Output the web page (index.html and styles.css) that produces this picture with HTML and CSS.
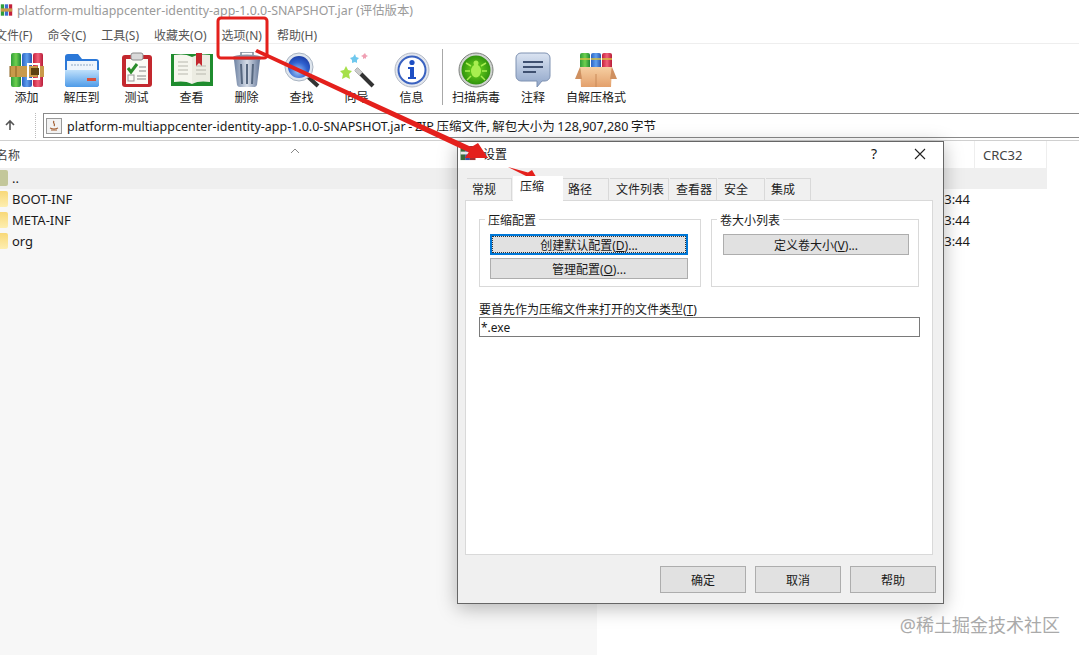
FILE: index.html
```html
<!DOCTYPE html>
<html lang="zh-CN">
<head>
    <meta charset="UTF-8">
    <title>platform-multiappcenter-identity-app-1.0.0-SNAPSHOT.jar</title>
    <link rel="stylesheet" href="styles.css">
</head>
<body>
    <svg class="defs" width="0" height="0">
        <defs>
            <linearGradient id="gGreen" x1="0" x2="1" y1="0" y2="0"><stop offset="0" stop-color="#2f9e3a"/><stop offset=".5" stop-color="#6fd04f"/><stop offset="1" stop-color="#1d8a34"/></linearGradient>
            <linearGradient id="gBlue" x1="0" x2="1" y1="0" y2="0"><stop offset="0" stop-color="#2b62c4"/><stop offset=".5" stop-color="#5fa0ee"/><stop offset="1" stop-color="#2a55b0"/></linearGradient>
            <linearGradient id="gRed" x1="0" x2="1" y1="0" y2="0"><stop offset="0" stop-color="#c4203a"/><stop offset=".5" stop-color="#f0607a"/><stop offset="1" stop-color="#b81c38"/></linearGradient>
            <linearGradient id="gFolder" x1="0" x2="0" y1="0" y2="1"><stop offset="0" stop-color="#bfe0fb"/><stop offset="1" stop-color="#4e9be8"/></linearGradient>
            <linearGradient id="gCan" x1="0" x2="1" y1="0" y2="0"><stop offset="0" stop-color="#6f83a3"/><stop offset=".5" stop-color="#d6dde8"/><stop offset="1" stop-color="#66799a"/></linearGradient>
            <radialGradient id="gLens" cx=".45" cy=".7" r=".7"><stop offset="0" stop-color="#9cc4f5"/><stop offset=".6" stop-color="#2f62d0"/><stop offset="1" stop-color="#1d3fa8"/></radialGradient>
            <radialGradient id="gVirus" cx=".5" cy=".5" r=".55"><stop offset="0" stop-color="#74dc20"/><stop offset="1" stop-color="#2a8c0c"/></radialGradient>
            <linearGradient id="gNote" x1="0" x2="0" y1="0" y2="1"><stop offset="0" stop-color="#dbe4f2"/><stop offset="1" stop-color="#8ea4c8"/></linearGradient>
            <linearGradient id="gBox" x1="0" x2="0" y1="0" y2="1"><stop offset="0" stop-color="#f6cfa2"/><stop offset="1" stop-color="#e3a06c"/></linearGradient>
        </defs>
    </svg>

    <div class="titlebar">
        <svg class="app-icon" viewBox="0 0 16 16"><rect x="1" y="1" width="4" height="14" fill="#2f9e3a"/><rect x="6" y="1" width="4" height="14" fill="#3a6fd0"/><rect x="11" y="1" width="4" height="14" fill="#c4203a"/><rect x="1" y="6" width="14" height="4" fill="#c99a4a"/></svg>
        <span class="title-text">platform-multiappcenter-identity-app-1.0.0-SNAPSHOT.jar (评估版本)</span>
    </div>

    <div class="menubar">
        <span class="menu-item menu-first">文件(F)</span>
        <span class="menu-item">命令(C)</span>
        <span class="menu-item">工具(S)</span>
        <span class="menu-item">收藏夹(O)</span>
        <span class="menu-item">选项(N)</span>
        <span class="menu-item">帮助(H)</span>
    </div>

    <div class="toolbar">
        <div class="tool tool-first">
            <svg class="tool-icon" viewBox="0 0 36 36">
                <rect x="2" y="1" width="10" height="34" rx="2" fill="url(#gGreen)"/>
                <rect x="13" y="1" width="10" height="34" rx="2" fill="url(#gBlue)"/>
                <rect x="24" y="1" width="10" height="34" rx="2" fill="url(#gRed)"/>
                <rect x="1" y="14" width="34" height="11" fill="#c99a4a"/>
                <path d="M1 14v11M7 14v11M29 14v11" stroke="#8a6220" stroke-width="1"/>
                <rect x="19" y="12" width="11" height="15" fill="none" stroke="#fff" stroke-width="2"/>
                <rect x="22" y="16" width="8" height="7" fill="#5c4212"/>
            </svg>
            <span class="tool-label">添加</span>
        </div>
        <div class="tool">
            <svg class="tool-icon wide" viewBox="0 0 36 36">
                <path d="M1 5a3 3 0 0 1 3-3h10l4 5h14a3 3 0 0 1 3 3v22a3 3 0 0 1-3 3H4a3 3 0 0 1-3-3z" fill="#2b78d8"/>
                <rect x="3" y="9" width="30" height="14" fill="#eef5fc"/>
                <path d="M7 13h22" stroke="#8fa8c4" stroke-width="1" stroke-dasharray="2 1"/>
                <path d="M1 18h34v14a3 3 0 0 1-3 3H4a3 3 0 0 1-3-3z" fill="url(#gFolder)"/>
                <rect x="23" y="26" width="9" height="3" fill="#d8503c"/>
            </svg>
            <span class="tool-label">解压到</span>
        </div>
        <div class="tool">
            <svg class="tool-icon" viewBox="0 0 36 36">
                <rect x="3" y="3" width="30" height="32" rx="3" fill="#c3282e"/>
                <rect x="7" y="7" width="22" height="25" fill="#fbfbf6"/>
                <rect x="12" y="1" width="12" height="7" rx="2" fill="#d9d9d9" stroke="#8c8c8c"/>
                <path d="M9 16l3 4 6-8" fill="none" stroke="#2a8c2a" stroke-width="3"/>
                <rect x="9" y="23" width="6" height="6" fill="none" stroke="#999"/>
                <path d="M20 15h7M20 19h7M18 24h9M18 27h9" stroke="#888" stroke-width="1.2"/>
            </svg>
            <span class="tool-label">测试</span>
        </div>
        <div class="tool">
            <svg class="tool-icon wide" viewBox="0 0 42 36">
                <path d="M0 2h42v32H0z" fill="#1f8c2e"/>
                <path d="M3 3c6-1 13-1 18 2v27c-5-3-12-3-18-2z" fill="#f6f6ee"/>
                <path d="M39 3c-6-1-13-1-18 2v27c5-3 12-3 18-2z" fill="#ecece2"/>
                <path d="M7 10h10M7 14h10M7 18h10M7 22h10M25 14h10M25 18h10M25 22h10" stroke="#b8b8ae" stroke-width="1.2"/>
                <path d="M25 1h6v13l-3-3-3 3z" fill="#c3282e"/>
            </svg>
            <span class="tool-label">查看</span>
        </div>
        <div class="tool">
            <svg class="tool-icon" viewBox="0 0 36 36">
                <rect x="12" y="0" width="12" height="4" fill="none" stroke="#7f8a99" stroke-width="1.5"/>
                <ellipse cx="18" cy="6" rx="15" ry="3.5" fill="#8b96a8"/>
                <path d="M5 8h26l-3 25a3 3 0 0 1-3 2H11a3 3 0 0 1-3-2z" fill="url(#gCan)"/>
                <path d="M12 12l1 20M18 12v20M24 12l-1 20" stroke="#56677f" stroke-width="2"/>
            </svg>
            <span class="tool-label">删除</span>
        </div>
        <div class="tool">
            <svg class="tool-icon" viewBox="0 0 36 36">
                <path d="M22 23l12 11" stroke="#333" stroke-width="4"/>
                <circle cx="15" cy="15" r="14" fill="#dfe6ee" stroke="#a9b4c2"/>
                <circle cx="15" cy="15" r="11" fill="url(#gLens)"/>
            </svg>
            <span class="tool-label">查找</span>
        </div>
        <div class="tool">
            <svg class="tool-icon" viewBox="0 0 36 36">
                <path d="M17 17l17 17" stroke="#333" stroke-width="4"/>
                <path d="M17 17l5 5" stroke="#ccc" stroke-width="4"/>
                <path d="M7 14l2 4 4 1-3 3 1 5-4-2-4 2 1-5-3-3 4-1z" fill="#a6e04a"/>
                <path d="M16 2l1 3 3 1-2 2v3l-2-1-3 1v-3l-2-2 3-1z" fill="#6fc8ee"/>
                <path d="M26 1l1 2 2 1-2 1v2l-1-1-2 1v-2l-2-1 2-1z" fill="#f0a0b4"/>
            </svg>
            <span class="tool-label">向导</span>
        </div>
        <div class="tool">
            <svg class="tool-icon" viewBox="0 0 36 36">
                <circle cx="18" cy="18" r="17" fill="#e2e6ee" stroke="#b4bac6"/>
                <circle cx="18" cy="18" r="13.5" fill="#fff" stroke="#3a62c0" stroke-width="2"/>
                <circle cx="18" cy="10.5" r="2.6" fill="#1e4fc4"/>
                <path d="M14 15h6v10h2v2h-8v-2h2v-8h-2z" fill="#1e4fc4"/>
            </svg>
            <span class="tool-label">信息</span>
        </div>
        <div class="tool-sep"></div>
        <div class="tool tool-scan">
            <svg class="tool-icon" viewBox="0 0 36 36">
                <circle cx="18" cy="18" r="17" fill="#d0d4d0" stroke="#7c807c"/>
                <circle cx="18" cy="18" r="14.5" fill="url(#gVirus)"/>
                <ellipse cx="18" cy="19" rx="5" ry="6.5" fill="#a8ee50"/>
                <circle cx="18" cy="11" r="2.5" fill="#a8ee50"/>
                <path d="M13 14l-5-3M23 14l5-3M12 19H7M24 19h5M13 24l-4 4M23 24l4 4" stroke="#a8ee50" stroke-width="1.5"/>
            </svg>
            <span class="tool-label">扫描病毒</span>
        </div>
        <div class="tool tool-note">
            <svg class="tool-icon" viewBox="0 0 36 36">
                <path d="M6 1h24a5 5 0 0 1 5 5v18a5 5 0 0 1-5 5h-3l-5 6v-6H6a5 5 0 0 1-5-5V6a5 5 0 0 1 5-5z" fill="url(#gNote)" stroke="#7f92b2"/>
                <path d="M8 10h20M8 15h20M8 20h13" stroke="#3f5070" stroke-width="1.8"/>
            </svg>
            <span class="tool-label">注释</span>
        </div>
        <div class="tool tool-sfx">
            <svg class="tool-icon wide" viewBox="0 0 42 36">
                <rect x="5" y="1" width="10" height="20" rx="2" fill="url(#gGreen)"/>
                <rect x="16" y="1" width="10" height="20" rx="2" fill="url(#gBlue)"/>
                <rect x="27" y="1" width="10" height="20" rx="2" fill="url(#gRed)"/>
                <path d="M5 7h10M16 7h10M27 7h10" stroke="#d8c040" stroke-width="1.5"/>
                <path d="M5 15h32l-1 20H6z" fill="url(#gBox)"/>
                <path d="M5 15L0 27h7zM37 15l5 12h-7z" fill="#cf9060"/>
                <path d="M21 22v13" stroke="#c98a58"/>
            </svg>
            <span class="tool-label">自解压格式</span>
        </div>
    </div>

    <div class="addressbar">
        <svg class="up-arrow" viewBox="0 0 12 12"><path d="M6 11V2M2 6l4-4 4 4" fill="none" stroke="#555" stroke-width="1.6"/></svg>
        <div class="grip"></div>
        <div class="address-box">
            <svg class="jar-icon" viewBox="0 0 16 16"><rect x=".5" y=".5" width="15" height="15" fill="#f2f2f2" stroke="#999"/><path d="M5 12h6M4 10c2 1 6 1 8 0M8 3c-2 2 2 3 0 5" fill="none" stroke="#a05a2c" stroke-width="1.2"/></svg>
            <span>platform-multiappcenter-identity-app-1.0.0-SNAPSHOT.jar - ZIP 压缩文件, 解包大小为 128,907,280 字节</span>
        </div>
    </div>

    <div class="filelist">
        <div class="list-head">
            <div class="head-name">名称<svg class="sort-caret" viewBox="0 0 10 6"><path d="M1 5l4-4 4 4" fill="none" stroke="#888"/></svg></div>
            <div class="head-crc">CRC32</div>
        </div>
        <div class="list-body">
            <div class="row row-up"><div class="row-name"><span class="folder folder-up"></span>..</div></div>
            <div class="row"><div class="row-name"><span class="folder"></span>BOOT-INF</div><div class="row-time">13:44</div></div>
            <div class="row"><div class="row-name"><span class="folder"></span>META-INF</div><div class="row-time">13:44</div></div>
            <div class="row"><div class="row-name"><span class="folder"></span>org</div><div class="row-time">13:44</div></div>
        </div>
    </div>

    <div class="dialog">
        <div class="dialog-title">
            <svg class="dialog-icon" viewBox="0 0 16 16"><rect x="0" y="0" width="5" height="15" fill="#3a6a3a"/><rect x="5" y="0" width="5" height="15" fill="#3a50a0"/><rect x="10" y="0" width="6" height="15" fill="#a03030"/><rect x="0" y="6" width="16" height="3" fill="#e8e8e8"/></svg>
            <span class="dialog-name">设置</span>
            <span class="dialog-help">?</span>
            <svg class="dialog-close" viewBox="0 0 12 12"><path d="M1 1l10 10M11 1L1 11" stroke="#222" stroke-width="1.1"/></svg>
        </div>
        <div class="dialog-body">
            <div class="tabs">
                <div class="tab tab-w46">常规</div>
                <div class="tab tab-active">压缩</div>
                <div class="tab tab-w46">路径</div>
                <div class="tab tab-w60">文件列表</div>
                <div class="tab tab-w48">查看器</div>
                <div class="tab tab-w48">安全</div>
                <div class="tab tab-w46">集成</div>
            </div>
            <div class="panel">
                <div class="groups">
                    <fieldset class="group group-left">
                        <legend>压缩配置</legend>
                        <button class="btn btn-focus">创建默认配置(<u>D</u>)...</button>
                        <button class="btn">管理配置(<u>O</u>)...</button>
                    </fieldset>
                    <fieldset class="group group-right">
                        <legend>卷大小列表</legend>
                        <button class="btn">定义卷大小(<u>V</u>)...</button>
                    </fieldset>
                </div>
                <label class="type-label" for="types">要首先作为压缩文件来打开的文件类型(<u>T</u>)</label>
                <input class="type-input" id="types" type="text" value="*.exe">
            </div>
            <div class="dialog-foot">
                <button class="foot-btn">确定</button>
                <button class="foot-btn">取消</button>
                <button class="foot-btn">帮助</button>
            </div>
        </div>
    </div>

    <!-- red marks drawn over the screenshot -->
    <svg class="marks" viewBox="0 0 1079 655">
        <rect x="218" y="18" width="49" height="40" rx="3" fill="none" stroke="#e4201c" stroke-width="3"/>
        <path d="M257 49L471.3 146.9 478 143 488 158 465 158 468.7 152.3 255 52z" fill="#e4201c"/>
        <path d="M508 167L528 172.5 532 170 538 180 525 178 526 176z" fill="#e4201c"/>
    </svg>

    <div class="watermark">@稀土掘金技术社区</div>
</body>
</html>
```

FILE: styles.css
```css
html, body {
    margin: 0;
    height: 655px;
    overflow: hidden;
    background: #fff;
    color: #1a1a1a;
    font-family: "Noto Sans", "Noto Sans CJK SC", sans-serif;
    font-size: 12px;
}
.defs {
    position: absolute;
}
.titlebar {
    height: 20px;
    display: flex;
    align-items: center;
    gap: 4px;
    color: #9a9a9a;
    font-size: 12.4px;
}
.app-icon {
    width: 13px;
    height: 16px;
    flex: none;
}
.menubar {
    height: 24px;
    box-sizing: border-box;
    padding-top: 6px;
    display: flex;
    align-items: center;
    border-bottom: 1px solid #eee;
    color: #555;
}
.menu-item {
    margin-right: 15px;
}
.menu-first {
    margin-left: -5px;
}
.toolbar {
    height: 64px;
    display: flex;
}
.tool {
    width: 55px;
    flex: none;
    display: flex;
    flex-direction: column;
    align-items: center;
    padding-top: 8px;
}
.tool-first {
    width: 53px;
    margin-right: 1px;
}
.tool-icon {
    width: 36px;
    height: 36px;
    margin-bottom: 2px;
}
.tool-icon.wide {
    width: 42px;
}
.tool-label {
    line-height: 16px;
}
.tool-sep {
    width: 1px;
    height: 56px;
    margin: 5px 5px 0 3px;
    background: #a8a8a8;
    flex: none;
}
.tool-scan {
    width: 56px;
}
.tool-note {
    width: 58px;
}
.tool-sfx {
    width: 68px;
}
.addressbar {
    height: 32px;
    display: flex;
    align-items: flex-start;
}
.up-arrow {
    width: 12px;
    height: 12px;
    flex: none;
    margin: 11px 0 0 4px;
}
.grip {
    width: 2px;
    height: 25px;
    flex: none;
    margin: 5px 6px 0 19px;
    border-left: 1px dotted #bbb;
    box-sizing: border-box;
}
.address-box {
    height: 25px;
    flex: 1;
    min-width: 0;
    margin-top: 5px;
    box-sizing: border-box;
    border: 1px solid #8a8a8a;
    border-right: none;
    display: flex;
    align-items: center;
    gap: 5px;
    padding-left: 2px;
    font-size: 12.5px;
    word-spacing: -0.7px;
    white-space: nowrap;
}
.jar-icon {
    width: 16px;
    height: 16px;
}
.filelist {
    border-top: 1px solid #d0d0d0;
}
.list-head {
    height: 27px;
    width: 1047px;
    display: flex;
    align-items: center;
    color: #444;
}
.head-name {
    width: 978px;
    margin-left: -4px;
    flex: none;
    position: relative;
}
.sort-caret {
    position: absolute;
    left: 294px;
    top: 2px;
    width: 10px;
    height: 6px;
}
.head-crc {
    flex: 1;
    align-self: stretch;
    display: flex;
    align-items: center;
    padding-left: 8px;
    font-size: 13px;
    border-left: 1px solid #eee;
    border-right: 1px solid #eee;
}
.list-body {
    height: 487px;
    font-size: 13px;
    background: linear-gradient(to right, #f7f7f7 597px, #fff 597px);
}
.row {
    height: 21px;
    box-sizing: border-box;
    padding-bottom: 2px;
    width: 1047px;
    display: flex;
    align-items: center;
}
.row-up {
    background: #efefef;
}
.row-name {
    flex: 1;
    display: flex;
    align-items: center;
    gap: 4px;
}
.row-time {
    width: 77px;
    margin-right: 77px;
    text-align: right;
    flex: none;
}
.folder {
    width: 8px;
    height: 16px;
    flex: none;
    background: linear-gradient(#f8d878, #fdeeb0);
    border-radius: 0 2px 2px 0;
}
.folder-up {
    background: #c3c79a;
}
.dialog {
    position: absolute;
    left: 457px;
    top: 141px;
    width: 487px;
    height: 463px;
    box-sizing: border-box;
    border: 1px solid #666;
    background: #f0f0f0;
    display: flex;
    flex-direction: column;
    box-shadow: 0 4px 18px rgba(0, 0, 0, 0.28);
}
.dialog-title {
    height: 26px;
    box-sizing: border-box;
    padding: 0 0 3px 2px;
    flex: none;
    background: #fff;
    display: flex;
    align-items: center;
}
.dialog-icon {
    width: 16px;
    height: 15px;
}
.dialog-name {
    margin-left: 7px;
    flex: 1;
}
.dialog-help {
    margin-right: 37px;
    font-size: 14px;
}
.dialog-close {
    width: 12px;
    height: 12px;
    margin-right: 17px;
}
.dialog-body {
    flex: 1;
    display: flex;
    flex-direction: column;
}
.tabs {
    height: 32px;
    flex: none;
    display: flex;
    align-items: flex-end;
    padding-left: 9px;
    position: relative;
    z-index: 1;
}
.tab {
    height: 22px;
    box-sizing: border-box;
    margin-right: 1px;
    padding-left: 5px;
    line-height: 22px;
    background: #f0f0f0;
    border: 1px solid #d9d9d9;
    border-bottom: none;
    border-left: none;
    color: #222;
}
.tab-w46 {
    width: 45px;
}
.tab-w48 {
    width: 47px;
    padding-left: 6px;
}
.tab-w60 {
    width: 59px;
    padding-left: 6px;
}
.tab-active {
    width: 50px;
    height: 25px;
    margin-bottom: -1px;
    padding-left: 7px;
    background: #fff;
    border: none;
    margin-right: 0;
}
.tab-active + .tab {
    width: 46px;
}
.panel {
    height: 355px;
    flex: none;
    box-sizing: border-box;
    margin: 0 10px 0 7px;
    padding: 9px 13px 0;
    background: #fff;
    border: 1px solid #d9d9d9;
}
.groups {
    display: flex;
    gap: 10px;
}
.group {
    margin: 0;
    height: 77px;
    box-sizing: border-box;
    padding: 5px 0 0 10px;
    border: 1px solid #d9d9d9;
    display: flex;
    flex-direction: column;
    min-inline-size: 0;
}
.group-left {
    width: 222px;
}
.group-right {
    width: 208px;
    padding-left: 11px;
}
.group legend {
    padding: 3px 3px 0;
    margin-left: -5px;
    line-height: 16px;
}
.group-right legend {
    margin-left: -6px;
}
.btn {
    height: 21px;
    width: 198px;
    margin-bottom: 3px;
    box-sizing: border-box;
    background: #e1e1e1;
    border: 1px solid #adadad;
    font: inherit;
    color: #1a1a1a;
    padding: 0;
}
.group-right .btn {
    width: 186px;
}
.btn-focus {
    border: 2px solid #0078d7;
    outline: 1px dotted #333;
    outline-offset: -3px;
}
.type-label {
    display: block;
    margin-top: 15px;
    line-height: 15px;
}
.type-input {
    display: block;
    width: 441px;
    height: 20px;
    box-sizing: border-box;
    border: 1px solid #7a7a7a;
    padding: 0 1px;
    font: inherit;
    color: #1a1a1a;
    outline: none;
}
.dialog-foot {
    display: flex;
    justify-content: flex-end;
    gap: 9px;
    padding: 11px 7px 0 0;
}
.foot-btn {
    width: 86px;
    height: 27px;
    background: #e1e1e1;
    border: 1px solid #adadad;
    font: inherit;
    color: #1a1a1a;
    padding: 0;
}
.marks {
    position: absolute;
    left: 0;
    top: 0;
    width: 1079px;
    height: 655px;
    pointer-events: none;
}
.watermark {
    position: absolute;
    right: 19px;
    top: 612px;
    font-size: 18px;
    line-height: 26px;
    color: #aaa;
}
```
